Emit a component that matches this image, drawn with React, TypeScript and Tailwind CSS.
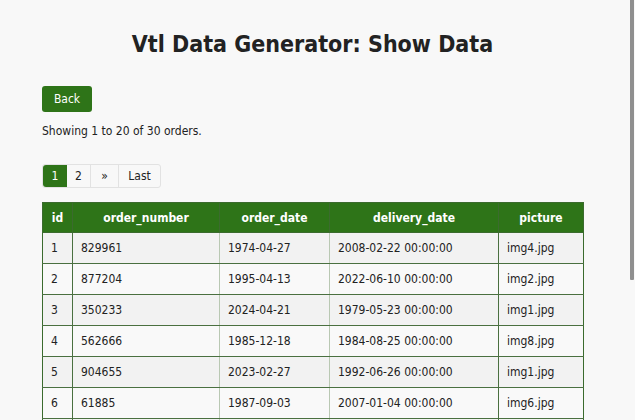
import React from "react";

const rows: [number, string, string, string, string][] = [
  [1, "829961", "1974-04-27", "2008-02-22 00:00:00", "img4.jpg"],
  [2, "877204", "1995-04-13", "2022-06-10 00:00:00", "img2.jpg"],
  [3, "350233", "2024-04-21", "1979-05-23 00:00:00", "img1.jpg"],
  [4, "562666", "1985-12-18", "1984-08-25 00:00:00", "img8.jpg"],
  [5, "904655", "2023-02-27", "1992-06-26 00:00:00", "img1.jpg"],
  [6, "61885", "1987-09-03", "2007-01-04 00:00:00", "img6.jpg"],
  [7, "412078", "2001-11-09", "1999-03-14 00:00:00", "img3.jpg"],
  [8, "735190", "1978-06-22", "2015-10-01 00:00:00", "img5.jpg"],
];

export default function App() {
  return (
    <div className="min-h-[620px] bg-[#f8f8f8] text-[#222] px-[42px] pt-[30px] font-['DejaVu_Sans_Condensed','DejaVu_Sans',sans-serif]">
      <div className="fixed right-[1px] top-0 h-[280px] w-[4px] rounded-b-[1px] bg-[#8f8f8f]" />
      <h1 className="pr-[10px] text-center text-[23px] font-bold leading-[28px] text-[#222]">
        Vtl Data Generator: Show Data
      </h1>
      <button className="mt-[28px] block h-[26px] w-[50px] rounded-[3px] bg-[#2e7418] text-[12px] text-white">
        Back
      </button>
      <p className="mt-[11px] text-[12px] leading-[16px]">Showing 1 to 20 of 30 orders.</p>
      <div className="mt-[25px] flex h-[24px] w-fit rounded-[3px] border border-[#e2e2e2] text-[12px]">
        <span className="flex w-[24px] items-center justify-center rounded-l-[3px] bg-[#2e7418] text-white">1</span>
        <span className="flex w-[24px] items-center justify-center border-r border-[#e2e2e2]">2</span>
        <span className="flex w-[28px] items-center justify-center border-r border-[#e2e2e2]">»</span>
        <span className="flex w-[41px] items-center justify-center">Last</span>
      </div>
      <table className="mt-[14px] w-[542px] border-collapse border border-[#3b6b2e] text-[12px]">
        <thead>
          <tr className="h-[30px] bg-[#2e7418] text-white">
            <th className="w-[30px] border border-[#3b6b2e] font-bold">id</th>
            <th className="w-[147px] border border-[#3b6b2e] font-bold">order_number</th>
            <th className="w-[110px] border border-[#3b6b2e] font-bold">order_date</th>
            <th className="w-[169px] border border-[#3b6b2e] font-bold">delivery_date</th>
            <th className="border border-[#3b6b2e] font-bold">picture</th>
          </tr>
        </thead>
        <tbody>
          {rows.map((r, i) => (
            <tr key={r[0]} className={i % 2 === 0 ? "h-[31px] bg-[#f2f2f2]" : "h-[31px] bg-[#f9f9f9]"}>
              <td className="border-b border-r border-[#4a7040] px-[8px]">{r[0]}</td>
              <td className="border-b border-r border-[#4a7040] border-r-[#b9c8b3] px-[8px]">{r[1]}</td>
              <td className="border-b border-r border-[#4a7040] border-r-[#b9c8b3] px-[8px]">{r[2]}</td>
              <td className="border-b border-r border-[#4a7040] px-[8px]">{r[3]}</td>
              <td className="border-b border-[#4a7040] px-[8px]">{r[4]}</td>
            </tr>
          ))}
        </tbody>
      </table>
    </div>
  );
}
